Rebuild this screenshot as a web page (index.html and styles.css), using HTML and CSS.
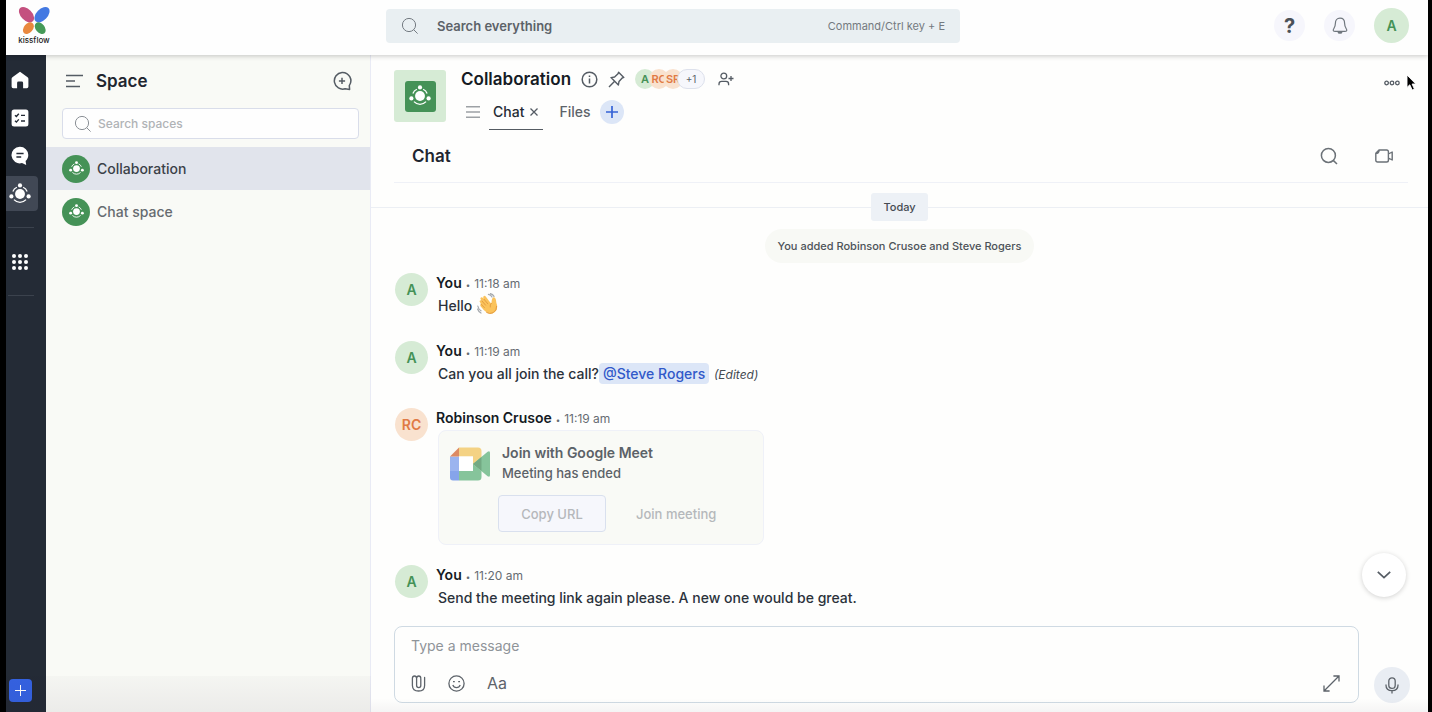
FILE: index.html
```html
<!DOCTYPE html>
<html lang="en">
<head>
<meta charset="utf-8">
<title>Kissflow - Collaboration</title>
<meta name="viewport" content="width=device-width, initial-scale=1">
<link rel="stylesheet" href="styles.css">
</head>
<body>
<svg class="defs" aria-hidden="true">
  <symbol id="orbit" viewBox="0 0 24 24">
    <circle cx="12" cy="12" r="5.4" fill="currentColor"/>
    <path d="M4.2 9.2A8.6 8.6 0 0 1 8.6 4.6M15.4 4.6A8.6 8.6 0 0 1 19.8 9.2M18.6 18.2A9 9 0 0 1 5.4 18.2" fill="none" stroke="currentColor" stroke-width="1.4"/>
    <circle cx="12" cy="2.6" r="2.3" fill="currentColor"/>
    <circle cx="2.6" cy="14.6" r="2.3" fill="currentColor"/>
    <circle cx="21.4" cy="14.6" r="2.3" fill="currentColor"/>
  </symbol>
  <symbol id="magnifier" viewBox="0 0 18 18">
    <circle cx="8" cy="8" r="6.6" fill="none" stroke="currentColor"/>
    <path d="M12.6 12.6L16.6 16.6" fill="none" stroke="currentColor"/>
  </symbol>
</svg>

<div class="app">
  <header class="topbar">
    <a class="logo" href="#" aria-label="kissflow home">
      <svg width="32" height="28" viewBox="0 0 32 28">
        <ellipse cx="8.5" cy="7.7" rx="9.2" ry="5.6" transform="rotate(46 8.5 7.7)" fill="#c4507f"/>
        <ellipse cx="24" cy="7.7" rx="9.2" ry="5.6" transform="rotate(-46 24 7.7)" fill="#4479e2"/>
        <ellipse cx="10.4" cy="21.2" rx="6.6" ry="4.5" transform="rotate(-50 10.4 21.2)" fill="#e9883e"/>
        <ellipse cx="22.2" cy="21.2" rx="6.6" ry="4.5" transform="rotate(50 22.2 21.2)" fill="#459a58"/>
      </svg>
      <span class="logo-name">kissflow</span>
    </a>
    <label class="global-search">
      <svg width="18" height="18"><use href="#magnifier"/></svg>
      <input type="search" placeholder="Search everything" aria-label="Search everything">
      <span class="shortcut">Command/Ctrl key + E</span>
    </label>
    <div class="top-actions">
      <button class="round-btn help" aria-label="Help">?</button>
      <button class="round-btn" aria-label="Notifications">
        <svg width="16" height="18" viewBox="0 0 16 18" fill="none" stroke="#6f767d" stroke-width="1.2" stroke-linejoin="round"><path d="M8 1.2C5 1.2 3.4 3.4 3.4 6.2C3.4 10.6 1.2 11.6 1.2 13.2C1.2 14.1 2.2 14.4 3 14.4H13C13.8 14.4 14.8 14.1 14.8 13.2C14.8 11.6 12.6 10.6 12.6 6.2C12.6 3.4 11 1.2 8 1.2Z"/><path d="M6 14.6C6.2 16.8 9.8 16.8 10 14.6Z" fill="#6f767d"/></svg>
      </button>
      <button class="profile" aria-label="Account">A</button>
    </div>
  </header>

  <nav class="rail" aria-label="Main">
    <button class="rail-item" aria-label="Home">
      <svg width="18" height="18" viewBox="0 0 18 18"><path d="M9 .8L16.6 6.2Q17.4 6.8 17.4 7.8V15.6Q17.4 17.2 15.8 17.2H12.1V12Q12.1 10.6 10.7 10.6H7.5Q6.1 10.6 6.1 12V17.2H2.2Q.6 17.2 .6 15.6V7.8Q.6 6.8 1.4 6.2Z" fill="#fff"/></svg>
    </button>
    <button class="rail-item" aria-label="Tasks">
      <svg width="18" height="18" viewBox="0 0 18 18"><rect x=".6" y=".6" width="16.8" height="16.8" rx="2.5" fill="#fff"/><path d="M4 6.2L5.4 7.5L7.8 4.8M4 11.8L5.4 13.1L7.8 10.4M10 6.4H14M10 12H14" fill="none" stroke="#242b36" stroke-width="1.4"/></svg>
    </button>
    <button class="rail-item" aria-label="Messages">
      <svg width="18" height="20" viewBox="0 0 18 20"><path d="M9 .8A8.3 8.3 0 0 1 17.3 9C17.3 12 16 13.6 14.6 15L15.2 19L11 17.1A8.3 8.3 0 1 1 9 .8Z" fill="#fff"/><path d="M5.4 7.4H12.6M5.4 11H10.2" stroke="#242b36" stroke-width="1.5"/></svg>
    </button>
    <button class="rail-item selected" aria-label="Spaces">
      <svg width="22" height="22"><use href="#orbit"/></svg>
    </button>
    <hr>
    <button class="rail-item" aria-label="Apps">
      <svg width="16" height="16" viewBox="0 0 16 16" fill="#fff"><circle cx="2" cy="2" r="2"/><circle cx="8" cy="2" r="2"/><circle cx="14" cy="2" r="2"/><circle cx="2" cy="8" r="2"/><circle cx="8" cy="8" r="2"/><circle cx="14" cy="8" r="2"/><circle cx="2" cy="14" r="2"/><circle cx="8" cy="14" r="2"/><circle cx="14" cy="14" r="2"/></svg>
    </button>
    <hr>
    <button class="create" aria-label="Create">
      <svg width="11" height="11" viewBox="0 0 11 11"><path d="M5.5 0V11M0 5.5H11" stroke="#fff"/></svg>
    </button>
  </nav>

  <aside class="sidebar">
    <div class="sidebar-head">
      <button class="icon-btn" aria-label="Collapse">
        <svg width="18" height="14" viewBox="0 0 18 14"><path d="M0 1.5H17M0 7H9M0 12.5H14" stroke="#555c64" stroke-width="1.5"/></svg>
      </button>
      <h1>Space</h1>
      <button class="icon-btn" aria-label="New space">
        <svg width="20" height="20" viewBox="0 0 20 20" fill="none" stroke="#555c64" stroke-width="1.5"><path d="M10 1.4A8.4 8.4 0 1 0 13.2 17.8L17.6 18.4L17.3 14.6A8.4 8.4 0 0 0 10 1.4Z" stroke-linejoin="round"/><path d="M10 6.8V13M6.9 9.9H13.1"/></svg>
      </button>
    </div>
    <label class="space-search">
      <svg width="18" height="18"><use href="#magnifier"/></svg>
      <input type="search" placeholder="Search spaces" aria-label="Search spaces">
    </label>
    <ul class="spaces">
      <li><a class="space current" href="#"><span class="space-icon"><svg width="15" height="15"><use href="#orbit"/></svg></span>Collaboration</a></li>
      <li><a class="space" href="#"><span class="space-icon"><svg width="15" height="15"><use href="#orbit"/></svg></span>Chat space</a></li>
    </ul>
  </aside>

  <main class="main">
    <header class="space-head">
      <div class="tile"><span><svg width="22" height="22"><use href="#orbit"/></svg></span></div>
      <div class="space-info">
        <div class="title-row">
          <h2>Collaboration</h2>
          <button class="icon-btn" aria-label="Info">
            <svg width="17" height="17" viewBox="0 0 17 17" fill="none" stroke="#555c64" stroke-width="1.5"><circle cx="8.5" cy="8.5" r="7.3"/><path d="M8.5 7.4V12.4M8.5 4.4V6"/></svg>
          </button>
          <button class="icon-btn" aria-label="Pin">
            <svg width="17" height="17" viewBox="0 0 17 17" fill="none" stroke="#555c64" stroke-width="1.4" stroke-linejoin="round"><path d="M10.6 1.2L15.8 6.4L14.2 7L11 10.4L10.4 14L3 6.6L6.6 6L10 2.8ZM6.4 10.6L1 16"/></svg>
          </button>
          <div class="members">
            <span class="member green">A</span><span class="member orange">RC</span><span class="member orange">SR</span><span class="more">+1</span>
          </div>
          <button class="icon-btn" aria-label="Add member">
            <svg width="16" height="14" viewBox="0 0 16 14" fill="none" stroke="#555c64" stroke-width="1.3"><circle cx="5.8" cy="4" r="2.9"/><path d="M1 13.2V12Q1 9.4 3.6 9.4H8Q10.6 9.4 10.6 12V13.2M13 4V9M10.5 6.5H15.5"/></svg>
          </button>
        </div>
        <div class="tabs">
          <button class="icon-btn" aria-label="Tab list">
            <svg width="14" height="12" viewBox="0 0 14 12"><path d="M0 .8H14M0 6H14M0 11.2H14" stroke="#9da1a5" stroke-width="1.4"/></svg>
          </button>
          <button class="tab active">Chat <svg width="8" height="8" viewBox="0 0 8 8"><path d="M.5 .5L7.5 7.5M7.5 .5L.5 7.5" stroke="#555c64" stroke-width="1.3"/></svg></button>
          <button class="tab">Files</button>
          <button class="add-tab" aria-label="Add tab"><svg width="12" height="12" viewBox="0 0 12 12"><path d="M6 0V12M0 6H12" stroke="#3563d6" stroke-width="1.7"/></svg></button>
        </div>
      </div>
      <button class="icon-btn options" aria-label="More options">
        <svg width="16" height="6" viewBox="0 0 16 6" fill="none" stroke="#555c64" stroke-width="1.3"><circle cx="2.6" cy="3" r="1.8"/><circle cx="8" cy="3" r="1.8"/><circle cx="13.4" cy="3" r="1.8"/></svg>
      </button>
    </header>

    <div class="chat-head">
      <h3>Chat</h3>
      <button class="icon-btn" aria-label="Search chat">
        <svg width="18" height="18" viewBox="0 0 18 18" fill="none" stroke="#6b7177" stroke-width="1.5"><circle cx="8.4" cy="8.4" r="7"/><path d="M13.2 13.4L17 17"/></svg>
      </button>
      <button class="icon-btn" aria-label="Start video call">
        <svg width="18" height="14" viewBox="0 0 18 14" fill="none" stroke="#6b7177" stroke-width="1.4" stroke-linejoin="round"><path d="M4 1H11.6Q13.4 1 13.4 2.8V11.2Q13.4 13 11.6 13H2.6Q.8 13 .8 11.2V4.2ZM13.4 5L17.2 3V11L13.4 9M.8 4.6Q4 4.6 4.2 1"/></svg>
      </button>
    </div>

    <section class="log" aria-label="Messages">
      <div class="day"><span>Today</span></div>
      <p class="notice">You added Robinson Crusoe and Steve Rogers</p>
      <div class="messages">
        <article class="message">
          <span class="avatar green">A</span>
          <div class="body">
            <div class="meta"><b>You</b><i>•</i><time>11:18 am</time></div>
            <p class="text with-emoji">Hello
              <svg role="img" aria-label="waving hand" width="22" height="22" viewBox="0 0 22 22">
                <path d="M3.2 9.4Q2 8.2 3 7.4Q3.8 6.8 4.8 7.8L3.8 6.6Q2.9 5.2 4 4.4Q5 3.8 6 5L7 6.2L6.4 5Q5.8 3.6 7 2.9Q8 2.4 8.9 3.8L13.2 9.4L14.4 10.2Q14.4 7 15.4 5.2Q16.6 3.6 18 4.8Q19.2 6 19.4 10Q21.6 15.4 18 19Q14.2 22.2 9.8 19.6Q7 17.8 4 13.8Q2.6 12 3.9 11.2Z" fill="#fbc35b"/>
                <path d="M4.8 7.8L8.6 12.2M7 6.2L10.8 10.8M4 11.2L7.4 14.6M14.4 10.2Q12.6 11.6 13.2 14" fill="none" stroke="#dd943a" stroke-width=".8" stroke-linecap="round"/>
                <path d="M19.6 13Q20 17.4 16 19.8Q12.6 21.4 9.4 19.4" fill="none" stroke="#e49b3f" stroke-width="1"/>
                <path d="M11.4 1.4Q14 2 15 4M13.4 .6Q15.8 1.2 17 3.4M.8 13Q1.4 16.2 4 17.8M.6 16Q1.4 18.6 4 20" fill="none" stroke="#a5a9ad" stroke-width="1.2" stroke-linecap="round"/>
              </svg>
            </p>
          </div>
        </article>
        <article class="message">
          <span class="avatar green">A</span>
          <div class="body">
            <div class="meta"><b>You</b><i>•</i><time>11:19 am</time></div>
            <p class="text">Can you all join the call?<a class="mention" href="#">@Steve Rogers</a> <em>(Edited)</em></p>
          </div>
        </article>
        <article class="message">
          <span class="avatar orange">RC</span>
          <div class="body">
            <div class="meta"><b>Robinson Crusoe</b><i>•</i><time>11:19 am</time></div>
            <div class="card">
              <svg width="40" height="34" viewBox="0 0 40 34">
                <path d="M0 9.5H9V25H0Z" fill="#9bb4ef"/>
                <path d="M0 24H9V33.5H3Q0 33.5 0 30.5Z" fill="#86a4ea"/>
                <path d="M9 .5V9.5H0Z" fill="#dd8a62"/>
                <path d="M9 .5H28Q31.5 .5 31.5 4V12L23 18V9.5H9Z" fill="#f4d284"/>
                <path d="M9 24H23V17L31.5 24V30Q31.5 33.5 28 33.5H9Z" fill="#86c49b"/>
                <path d="M23 17L37.6 4.8Q40 3.4 40 6V28Q40 30.6 37.6 29.2Z" fill="#86c49b"/>
                <path d="M23 17L31.5 10V24Z" fill="#73a983"/>
                <path d="M9 9.5H23V24H9Z" fill="#fff"/>
              </svg>
              <div class="card-body">
                <h4>Join with Google Meet</h4>
                <p>Meeting has ended</p>
                <div class="card-actions">
                  <button class="outlined">Copy URL</button>
                  <button>Join meeting</button>
                </div>
              </div>
            </div>
          </div>
        </article>
        <article class="message">
          <span class="avatar green">A</span>
          <div class="body">
            <div class="meta"><b>You</b><i>•</i><time>11:20 am</time></div>
            <p class="text">Send the meeting link again please. A new one would be great.</p>
          </div>
        </article>
      </div>
      <button class="to-latest" aria-label="Scroll to latest">
        <svg width="14" height="8" viewBox="0 0 14 8"><path d="M.8 .8L7 6.6L13.2 .8" fill="none" stroke="#555c64" stroke-width="1.7"/></svg>
      </button>
    </section>

    <footer class="composer-row">
      <form class="composer">
        <input type="text" placeholder="Type a message" aria-label="Type a message">
        <div class="tools">
          <button type="button" class="icon-btn" aria-label="Attach file">
            <svg width="15" height="17" viewBox="0 0 15 17" fill="none" stroke="#5d636a" stroke-width="1.3" stroke-linecap="round"><path d="M9.8 4V10.6Q9.8 12.6 7.8 12.6Q5.6 12.6 5.6 10.6V3.2Q5.4 1 3.6 1Q1.4 1 1.4 3.2V10.4Q1.6 16 7.6 16Q13.6 16 13.6 10.4V2.4M5.6 3.2Q5.8 1 7.8 1Q9.8 1 9.8 3.4"/></svg>
          </button>
          <button type="button" class="icon-btn" aria-label="Emoji">
            <svg width="17" height="17" viewBox="0 0 17 17" fill="none" stroke="#5d636a" stroke-width="1.3"><circle cx="8.5" cy="8.5" r="7.6"/><path d="M4.8 10Q5.8 12.6 8.5 12.6Q11.2 12.6 12.2 10M5 6.6H6.8M10.2 6.6H12"/></svg>
          </button>
          <button type="button" class="icon-btn format" aria-label="Text formatting">Aa</button>
          <button type="button" class="icon-btn expand" aria-label="Expand">
            <svg width="17" height="17" viewBox="0 0 17 17" fill="none" stroke="#5d636a" stroke-width="1.3"><path d="M1 16L16 1M10.4 1H16V6.6M1 10.4V16H6.6"/></svg>
          </button>
        </div>
      </form>
      <button class="mic" aria-label="Record audio">
        <svg width="14" height="17" viewBox="0 0 14 17" fill="none" stroke="#5d636a" stroke-width="1.3"><rect x="3.8" y=".8" width="6.4" height="10.6" rx="3.2"/><path d="M1 7.4V8.2Q1 13.6 7 13.6Q13 13.6 13 8.2V7.4M7 13.6V16.6"/></svg>
      </button>
    </footer>
  </main>

  <div class="bottom-shade"></div>
  <svg class="pointer" width="11" height="18" viewBox="0 0 11 18" aria-hidden="true"><path d="M1 1V13.4L3.8 10.8L6.2 16L8.4 15L6.1 10H9.8Z" fill="#000" stroke="#fff" stroke-width=".9"/></svg>
</div>
</body>
</html>
```
FILE: styles.css
```css
* { box-sizing: border-box; }

body {
  margin: 0;
  background: #000;
  color: #1f2630;
  font: 14px/20px Inter, "Liberation Sans", sans-serif;
}

h1, h2, h3, h4, p, ul { margin: 0; padding: 0; }
ul { list-style: none; }
a { color: inherit; text-decoration: none; }
svg { display: block; flex: none; }
.defs { position: absolute; width: 0; height: 0; }

button, input { font: inherit; color: inherit; }
button {
  display: flex;
  align-items: center;
  justify-content: center;
  padding: 0;
  border: 0;
  background: none;
}
input {
  flex: 1;
  min-width: 0;
  padding: 0;
  border: 0;
  outline: 0;
  background: none;
}
.icon-btn { flex: none; }

.green { background: #d6ebd5; color: #459257; }
.orange { background: #f9e2cf; color: #e07a45; }

.app {
  position: relative;
  display: grid;
  grid-template: 55px minmax(0, 1fr) / 40px 325px minmax(0, 1fr);
  height: 100vh;
  margin: 0 4px 0 6px;
  background: #fefefd;
}

/* Top bar */
.topbar {
  z-index: 1;
  grid-column: 1 / -1;
  display: flex;
  align-items: center;
  padding: 0 19px 4px 12px;
  background: #fefefe;
  box-shadow: 0 1px 5px rgba(0, 0, 0, .22);
}
.logo {
  display: flex;
  flex-direction: column;
  align-items: center;
  width: 32px;
  margin-right: 336px;
}
.logo-name { font-size: 8px; line-height: 10px; font-weight: 500; color: #222; }
.global-search {
  display: flex;
  align-items: center;
  flex: 0 1 574px;
  height: 34px;
  padding: 0 15px;
  gap: 18px;
  border-radius: 4px;
  background: #e9eff2;
  color: #747b82;
}
.global-search input { font-size: 13px; font-weight: 600; }
.global-search input::placeholder { color: #5c6268; opacity: 1; }
.shortcut { font-size: 11px; color: #747a80; }
.top-actions { display: flex; align-items: center; gap: 19px; margin-left: auto; }
.round-btn { width: 31px; height: 31px; border-radius: 50%; background: #f6f6fc; }
.help { font-size: 20px; font-weight: 700; color: #4b5158; }
.profile {
  width: 35px;
  height: 35px;
  border-radius: 50%;
  background: #d6ebd5;
  color: #459257;
  font-weight: 600;
}

/* Navigation rail */
.rail {
  display: flex;
  flex-direction: column;
  gap: 3px;
  padding: 7px 0 10px;
  background: #242b36;
}
.rail-item {
  flex: none;
  width: 32px;
  height: 35px;
  padding-right: 4px;
  border-radius: 0 4px 4px 0;
  color: #fff;
}
.rail-item.selected { background: #414855; }
.rail hr { width: 26px; margin: 13px 2px; border: 0; border-top: 1px solid #3b424d; }
.create {
  width: 23px;
  height: 23px;
  margin: auto 0 0 3px;
  border-radius: 4px;
  background: #3563e3;
}

/* Spaces sidebar */
.sidebar { border-right: 1px solid #e9ebf5; background: #f9faf6; }
.sidebar-head {
  display: flex;
  align-items: center;
  gap: 12px;
  height: 53px;
  padding: 0 18px 2px 20px;
}
.sidebar-head h1 { flex: 1; font-size: 17px; line-height: 24px; font-weight: 600; }
.space-search {
  display: flex;
  align-items: center;
  gap: 6px;
  height: 31px;
  margin: 0 11px 8px 16px;
  padding: 0 11px;
  border: 1px solid #d9ddea;
  border-radius: 4px;
  background: #fefefe;
  color: #8b9096;
}
.space-search input { font-size: 12px; font-weight: 500; }
.space-search input::placeholder { color: #b0b3b6; opacity: 1; }
.space {
  display: flex;
  align-items: center;
  gap: 7px;
  height: 43px;
  padding: 0 16px;
  font-weight: 500;
  color: #666b70;
}
.space.current { background: #e1e4ec; color: #3b4148; }
.space-icon {
  display: grid;
  place-items: center;
  width: 28px;
  height: 28px;
  border-radius: 50%;
  background: #459257;
  color: #fff;
}

/* Space header */
.main { display: flex; flex-direction: column; min-width: 0; }
.space-head { display: flex; padding: 12px 28px 0 23px; }
.tile {
  display: grid;
  place-items: center;
  width: 52px;
  height: 52px;
  margin-top: 3px;
  border-radius: 3px;
  background: #d6ebd5;
}
.tile span {
  display: grid;
  place-items: center;
  width: 31px;
  height: 31px;
  border-radius: 3px;
  background: #459257;
  color: #fff;
}
.space-info { flex: 1; margin-left: 15px; }
.title-row { display: flex; align-items: center; gap: 10px; height: 24px; }
.title-row h2 { font-size: 17px; line-height: 24px; font-weight: 600; color: #151b24; }
.members { display: flex; align-items: center; margin-right: 3px; }
.member {
  width: 20px;
  height: 20px;
  margin-right: -6px;
  border-radius: 50%;
  overflow: hidden;
  font-size: 11px;
  line-height: 20px;
  font-weight: 600;
  text-align: center;
}
.more {
  width: 28px;
  height: 20px;
  border: 1px solid #dde1ec;
  border-radius: 10px;
  background: #f6f7fc;
  color: #5d636a;
  font-size: 10px;
  line-height: 18px;
  text-align: center;
}
.tabs { display: flex; align-items: center; height: 36px; margin: 3px 0 0 5px; }
.tab { height: 36px; padding: 0 5px 0 4px; margin-left: 8px; gap: 6px; color: #5d636a; font-weight: 500; border-bottom: 1px solid transparent; }
.tab.active { margin-left: 9px; border-color: #555b62; color: #252c35; }
.tab + .tab { margin-left: 12px; }
.add-tab { width: 24px; height: 24px; margin-left: 5px; border-radius: 50%; background: #dce6f7; }
.options { height: 32px; }

.chat-head {
  display: flex;
  align-items: center;
  gap: 37px;
  height: 53px;
  margin: 0 20px 0 23px;
  padding: 0 15px 0 18px;
  border-bottom: 1px solid #eff1f7;
}
.chat-head h3 { flex: 1; font-size: 17px; line-height: 24px; font-weight: 600; }

/* Message log */
.log { position: relative; flex: 1; min-height: 0; padding-top: 10px; }
.day { display: flex; align-items: center; font-size: 11px; font-weight: 500; color: #454b52; }
.day::before, .day::after { content: ""; flex: 1; border-top: 1px solid #eceff4; }
.day span { padding: 4px 12px; border-radius: 3px; background: #edf1f6; }
.notice {
  width: fit-content;
  margin: 8px auto 10px;
  padding: 7px 13px;
  border-radius: 17px;
  background: #f8f9f5;
  color: #4c5258;
  font-size: 11px;
  font-weight: 500;
}
.messages { display: flex; flex-direction: column; gap: 20px; padding: 0 24px; }
.message { display: flex; gap: 8px; }
.avatar {
  flex: none;
  width: 33px;
  height: 33px;
  border-radius: 50%;
  font-weight: 600;
  line-height: 33px;
  text-align: center;
}
.meta { display: flex; align-items: baseline; gap: 4px; height: 20px; font-size: 12px; color: #666c72; }
.meta i { font-size: 8px; font-style: normal; }
.meta b { font-size: 14px; font-weight: 600; color: #151b24; }
.text { margin-left: 2px; line-height: 26px; font-weight: 450; color: #2b323b; }
.with-emoji { display: flex; gap: 5px; height: 28px; }
.mention { padding: 2px 4px; border-radius: 4px; background: #dce6f7; color: #3159c9; }
.text em { margin-left: 1px; font-size: 12px; font-weight: 400; color: #454b52; }

.card {
  display: flex;
  gap: 12px;
  width: 326px;
  margin: 2px 0 0 2px;
  padding: 12px 12px 12px 11px;
  border: 1px solid #eff1f8;
  border-radius: 8px;
  background: #f9faf6;
}
.card > svg { margin-top: 4px; }
.card-body { color: #5c6268; }
.card h4 { font-size: 14px; line-height: 20px; font-weight: 600; }
.card p { font-size: 13px; font-weight: 500; }
.card-actions { display: flex; align-items: center; gap: 30px; margin: 12px 0 0 -4px; color: #b5b8bb; }
.card-actions button { font-size: 13px; font-weight: 500; }
.card-actions .outlined {
  width: 108px;
  height: 37px;
  border: 1px solid #d9e0ee;
  border-radius: 4px;
  background: #f6f7fc;
}
.to-latest {
  position: absolute;
  right: 22px;
  bottom: 29px;
  width: 44px;
  height: 44px;
  border-radius: 50%;
  background: #fff;
  box-shadow: 0 1px 5px rgba(0, 0, 0, .18);
}

/* Composer */
.composer-row { display: flex; align-items: flex-end; gap: 15px; padding: 0 18px 9px 23px; }
.composer {
  display: flex;
  flex-direction: column;
  flex: 1;
  height: 77px;
  padding: 9px 18px 8px 16px;
  border: 1px solid #cfdae3;
  border-radius: 8px;
}
.composer > input { flex: none; height: 20px; }
.composer > input::placeholder { color: #8f9499; opacity: 1; }
.tools { display: flex; align-items: center; gap: 22px; margin-top: auto; height: 22px; color: #5d636a; }
.format { font-size: 16px; }
.expand { margin-left: auto; }
.mic { width: 36px; height: 36px; border-radius: 50%; background: #e9edf3; }

/* Fades out the bottom edge: tall over the sidebar, short over the chat */
.bottom-shade {
  position: absolute;
  inset: auto 0 0;
  height: 36px;
  background:
    linear-gradient(rgba(20, 0, 30, .02), rgba(20, 0, 30, .06)) left bottom / 365px 36px no-repeat,
    linear-gradient(rgba(20, 0, 30, 0), rgba(20, 0, 30, .04)) 365px bottom / 100% 14px no-repeat;
  pointer-events: none;
}
.pointer { position: absolute; z-index: 2; top: 74px; right: 11px; }
```
